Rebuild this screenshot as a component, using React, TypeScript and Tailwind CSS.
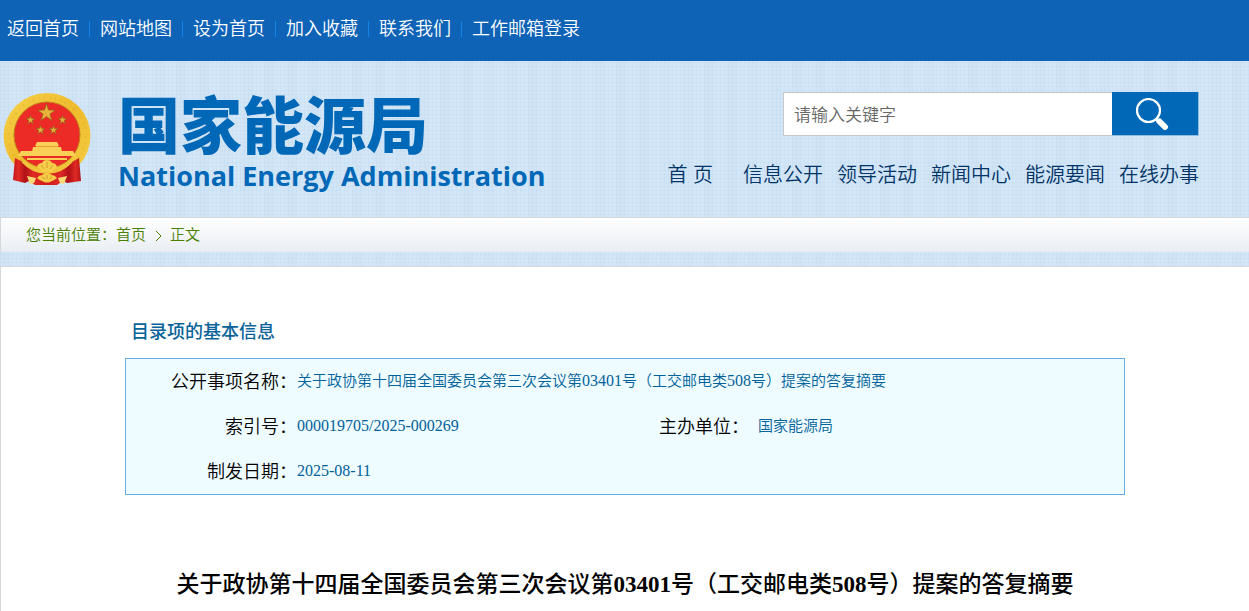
import React from "react";

const topLinks = ["返回首页", "网站地图", "设为首页", "加入收藏", "联系我们", "工作邮箱登录"];
const navLinks = ["信息公开", "领导活动", "新闻中心", "能源要闻", "在线办事"];

const starPoints = (cx: number, cy: number, r: number) =>
  Array.from({ length: 10 }, (_, i) => {
    const radius = i % 2 === 0 ? r : r * 0.4;
    const angle = (Math.PI / 5) * i - Math.PI / 2;
    return `${cx + radius * Math.cos(angle)},${cy + radius * Math.sin(angle)}`;
  }).join(" ");

function Emblem() {
  return (
    <svg className="h-24 w-[90px] shrink-0" viewBox="0 0 90 96" aria-hidden="true">
      <defs>
        <linearGradient id="gold" x1="0" y1="0" x2="1" y2="1">
          <stop offset="0" stopColor="#f7d24a" />
          <stop offset="0.5" stopColor="#eebb2c" />
          <stop offset="1" stopColor="#f6cf45" />
        </linearGradient>
        <linearGradient id="drape" x1="0" y1="0" x2="1" y2="0">
          <stop offset="0" stopColor="#c4161b" />
          <stop offset="0.08" stopColor="#e02a24" />
          <stop offset="0.18" stopColor="#b01118" />
          <stop offset="0.3" stopColor="#e02a24" />
          <stop offset="0.5" stopColor="#cf1a1e" />
          <stop offset="0.7" stopColor="#e02a24" />
          <stop offset="0.82" stopColor="#b01118" />
          <stop offset="0.92" stopColor="#e02a24" />
          <stop offset="1" stopColor="#b3141a" />
        </linearGradient>
      </defs>
      <ellipse cx="44" cy="43" rx="43.500" ry="43" fill="url(#gold)" />
      <ellipse cx="44" cy="43" rx="38.500" ry="38" fill="none" stroke="#c98a1c" strokeWidth="3" strokeDasharray="2 5 1 3" opacity="0.15" />
      <circle cx="44" cy="42" r="33" fill="#ec2a26" stroke="#c27a1c" strokeWidth="1" />
      <g fill="#e9b23a" stroke="#8f6420" strokeWidth="0.7">
        <polygon points={starPoints(43.500, 20, 9)} />
        <polygon points={starPoints(27.500, 27, 4.500)} />
        <polygon points={starPoints(59.500, 27, 4.500)} />
        <polygon points={starPoints(37.500, 37, 4.500)} />
        <polygon points={starPoints(50.500, 37, 4.500)} />
      </g>
      <g fill="#fad156">
        <path d="M34 49h20l2 4H32zM33 53h22v2H33zM30 54h28l1 5H29z" />
        <path d="M18 58h52l3 5H15z" />
        <path d="M24 65h40v2H24z" />
      </g>
      <path d="M33 53.500h22" stroke="#e08a25" strokeWidth="0.7" />
      <path d="M12 65l10 5 6 6q16 6 32 0l7-6 9-5 2 23-14 2-4-2-6 4H32l-6-4-4 2-12-3z" fill="url(#drape)" />
      <path d="M20 68q10 11 24 11t24-11" fill="none" stroke="#f1c23b" strokeWidth="4" />
      <path d="M24 83l9 2-2 5-4 1zM64 83l-9 2 2 5 4 1z" fill="#f8d978" />
      <path d="M34 74q1-4 5-4 1-3 5-3t5 3q4 0 5 4-4 2-5 5H39q-1-3-5-5z" fill="#f7ce4a" />
      <path d="M34 85q2-3 5-3 2-2 5-2t5 2q3 0 5 3-2 2-5 3-5 3-10 0-3-1-5-3z" fill="#f5ca46" />
      <path d="M38 72l3 4M50 72l-3 4M44 69v6M39 84l3 2M49 84l-3 2M44 82v4" stroke="#d1952a" strokeWidth="0.9" />
    </svg>
  );
}

function Digits({ children }: { children: string }) {
  return <span className="font-['Liberation_Serif',serif] text-base leading-none">{children}</span>;
}

export default function App() {
  return (
    <div className="min-h-screen bg-[#d4e7f8] bg-[repeating-linear-gradient(90deg,#b4cfe830_0px,#b4cfe830_1px,transparent_1px,transparent_4px),repeating-linear-gradient(0deg,#b4cfe830_0px,#b4cfe830_1px,transparent_1px,transparent_4px),repeating-linear-gradient(90deg,#bcd5eb26_0px,#bcd5eb26_11px,transparent_11px,transparent_22px)] font-['Liberation_Sans','Noto_Sans_CJK_SC',sans-serif]">
      <nav className="flex h-[61px] items-start bg-[#0e63b7] pt-[17px] pl-[7px]">
        <ul className="flex h-6 items-center text-lg leading-6 text-white">
          {topLinks.map((label, i) => (
            <li key={label} className="flex items-center">
              {i > 0 && <span className="mx-[10px] h-4 w-px bg-[#1484e6]" />}
              <a href="#" className="font-[350]">{label}</a>
            </li>
          ))}
        </ul>
      </nav>

      <header className="flex h-[156px] items-start justify-between pr-[50px] pl-[3px]">
        <a href="#" className="flex pt-8 text-[#0068b7]">
          <Emblem />
          <span className="ml-[25px] flex flex-col pt-1">
            <span className="text-[62px] leading-[62px] font-black">国家能源局</span>
            <span className="font-['Open_Sans',sans-serif] text-[27px] leading-[34px] font-bold whitespace-nowrap">
              National Energy Administration
            </span>
          </span>
        </a>
        <div className="flex flex-col items-end pt-[31px]">
          <form className="flex h-11" onSubmit={(e) => e.preventDefault()}>
            <input
              type="text"
              aria-label="请输入关键字"
              placeholder="请输入关键字"
              className="w-[329px] border border-r-0 border-[#c8c8c8] bg-white px-[10px] pt-[3px] text-[17px] font-[350] outline-none placeholder:text-[#666]"
            />
            <button type="submit" aria-label="搜索" className="flex w-[87px] justify-center border-r border-b border-[#8fbde2] bg-[#0068b7] pt-[6px] pr-[6px]">
              <svg className="h-[34px] w-[34px]" viewBox="0 0 34 34" fill="none" stroke="white" aria-hidden="true">
                <circle cx="13.500" cy="12.500" r="11.500" strokeWidth="2.200" />
                <path d="M21 21l4 4" strokeWidth="3" />
                <path d="M24.500 23.500l5.500 5.500" strokeWidth="6" strokeLinecap="round" />
              </svg>
            </button>
          </form>
          <nav className="mt-6 flex gap-[14px] text-xl leading-[30px] font-[350] whitespace-nowrap text-[#003366]">
            <a href="#" className="mr-4">首 页</a>
            {navLinks.map((label) => (
              <a key={label} href="#">{label}</a>
            ))}
          </nav>
        </div>
      </header>

      <nav className="flex h-[35px] items-center border-t border-l border-[#d5d7d9] bg-linear-to-b from-white to-[#e9edf3] pt-px pl-[25px] text-[15px] font-[350] text-[#4a8000]">
        <span>您当前位置：</span>
        <a href="#">首页</a>
        <svg className="mx-2 h-3 w-2" viewBox="0 0 8 12" fill="none" stroke="currentColor" aria-hidden="true">
          <path d="M2 1l5 5-5 5" />
        </svg>
        <span>正文</span>
      </nav>

      <main className="mt-[14px] min-h-[345px] border-t border-l border-[#d5d7d9] bg-white pt-[50px]">
        <section className="mx-auto w-full max-w-[1000px]">
          <h2 className="pl-[6px] text-lg leading-[30px] font-medium text-[#0b6499]">目录项的基本信息</h2>
          <dl className="mt-[11px] grid auto-rows-[45px] grid-cols-[171px_362px_99px_1fr] items-center border border-[#6bade6] bg-[#eefbff] text-[15px] font-[350] text-[#00629b] [&>dt]:text-right [&>dt]:text-lg [&>dt]:text-black">
            <dt>公开事项名称：</dt>
            <dd className="col-span-3">
              关于政协第十四届全国委员会第三次会议第<Digits>03401</Digits>号（工交邮电类<Digits>508</Digits>号）提案的答复摘要
            </dd>
            <dt>索引号：</dt>
            <dd><Digits>000019705/2025-000269</Digits></dd>
            <dt className="pr-[9px]">主办单位：</dt>
            <dd>国家能源局</dd>
            <dt>制发日期：</dt>
            <dd className="col-span-3"><Digits>2025-08-11</Digits></dd>
          </dl>
        </section>
        <h1 className="mt-[75px] text-center font-['Liberation_Serif','Noto_Sans_CJK_SC',serif] text-[23px] leading-[30px] font-medium text-black">
          关于政协第十四届全国委员会第三次会议第<span className="font-bold">03401</span>号（工交邮电类<span className="font-bold">508</span>号）提案的答复摘要
        </h1>
      </main>
    </div>
  );
}
